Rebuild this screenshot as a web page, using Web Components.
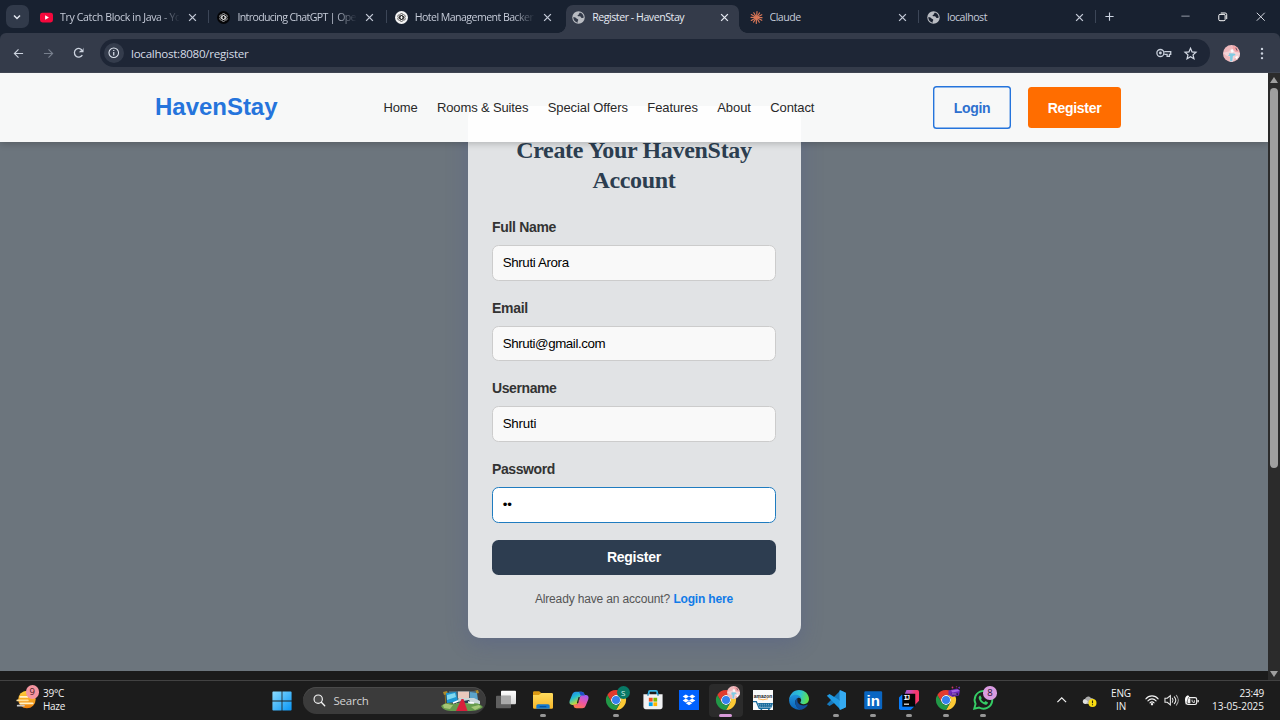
<!DOCTYPE html>
<html lang="en">
<head>
<meta charset="utf-8">
<title>Register - HavenStay</title>
<style>
html,body{margin:0;height:100%;overflow:hidden;background:#1c1c1c}
body{font-family:"Open Sans","Noto Sans",sans-serif}
</style>
</head>
<body>
<desktop-screen></desktop-screen>
<script>
const define=(name,html,setup)=>customElements.define(name,class extends HTMLElement{
  connectedCallback(){
    if(this.shadowRoot)return;
    const t=document.createElement('template');
    t.innerHTML=typeof html==='function'?html(this):html;
    this.attachShadow({mode:'open'}).append(t.content.cloneNode(true));
    if(setup)setup(this);
  }
});

/* Text run whose tracking is adjusted so that it spans the width in its "w" attribute. */
define('fit-text','<style>:host{display:inline-block;white-space:pre}span{display:inline-block}</style><span><slot></slot></span>',el=>{
  const s=el.shadowRoot.querySelector('span'),n=el.textContent.length,w=parseFloat(el.getAttribute('w'));
  if(w){const k=(w-s.getBoundingClientRect().width)/n;s.style.letterSpacing=k.toFixed(3)+'px';el.style.width=w+'px';}
});

const chrome='<circle cx="24" cy="24" r="12" fill="#fff"/><path fill="#e33b2e" d="M24 12h20.8A24 24 0 0 0 3.2 12l10.4 18A12 12 0 0 1 24 12z"/><path fill="#fcc934" d="M34.4 30 24 48A24 24 0 0 0 44.8 12H24a12 12 0 0 1 10.4 18z"/><path fill="#229847" d="M13.6 30 3.2 12A24 24 0 0 0 24 48l10.4-18a12 12 0 0 1-20.8 0z"/><circle cx="24" cy="24" r="9.6" fill="#3581ee"/>';
const knot=c=>`<g fill="none" stroke="${c}" stroke-width="1.35">`+[0,60,120,180,240,300].map(a=>`<path transform="rotate(${a} 12 12)" d="M8 14.300V6.500a4.100 4.100 0 0 1 7.300-2.300M8 9.700l4-2.300 5.500 3.200"/>`).join('')+'</g>';
const globe='<circle cx="12" cy="12" r="11.5" fill="#b9bcc2"/><path fill="VAR" d="M2.5 11c3 .2 4.500 1 5.500 2.500 1 1.600 3 1 3.500 2.600.4 1.500-1.200 2-1.200 3.800 0 .7.300 1.300.6 1.900A10 10 0 0 1 2.500 11zM14.500 2.700c-.4 1.500-2 1.800-2 3.300 0 1.400-2.300 1.100-2.300 2.500 0 1.600 2.400 1.300 4.300 1.400 2 .1 1.600 2.800 3.200 2.900 1.500.1 2.100-.9 3.900-.4A10 10 0 0 0 14.500 2.700z"/>';
const I={
 down:['0 0 24 24','<path d="M6 9l6 6 6-6" fill="none" stroke="#e3e8f0" stroke-width="3"/>'],
 youtube:['0 0 24 24','<rect y="3" width="24" height="18" rx="4.500" fill="#f5083c"/><path fill="#fff" d="M9.500 8v8l7-4z"/>'],
 gptDark:['0 0 24 24','<circle cx="12" cy="12" r="12" fill="#050507"/><g transform="translate(2.400 2.400) scale(.8)">'+knot('#dcdcdc')+'</g>'],
 gptLight:['0 0 24 24','<circle cx="12" cy="12" r="12" fill="#f4f4f4"/><g transform="translate(2.400 2.400) scale(.8)">'+knot('#202020')+'</g>'],
 globe:['0 0 24 24',globe.replace('VAR','#1a2130')],
 globeActive:['0 0 24 24',globe.replace('VAR','#343b4a')],
 claude:['0 0 24 24','<g stroke="#d97757" stroke-width="2.100" stroke-linecap="round">'+[5,34,62,92,118,150,182,213,240,272,300,331].map((a,i)=>`<path transform="rotate(${a} 12 12)" d="M12 12V${i%2?1.8:.9}"/>`).join('')+'</g>'],
 x:['0 0 24 24','<path d="M3 3l18 18M21 3L3 21" stroke="currentColor" stroke-width="3.500"/>'],
 xthin:['0 0 24 24','<path d="M2 2l20 20M22 2L2 22" stroke="#dfe3ea" stroke-width="2.400"/>'],
 plus:['0 0 24 24','<path d="M12 1v22M1 12h22" stroke="#cdd5e2" stroke-width="3"/>'],
 min:['0 0 24 24','<path d="M1 11h22" stroke="#aab0ba" stroke-width="2.300"/>'],
 restore:['0 0 24 24','<g fill="none" stroke="#fff" stroke-width="2.500"><rect x="2" y="6" width="16" height="16" rx="3"/><path d="M7 2.500h11a4 4 0 0 1 4 4V18"/></g>'],
 back:['0 0 24 24','<path d="M22 12H3M12 3l-9 9 9 9" fill="none" stroke="#ccd3df" stroke-width="2.500"/>'],
 forward:['0 0 24 24','<path d="M2 12h19M12 3l9 9-9 9" fill="none" stroke="#777f8d" stroke-width="2.500"/>'],
 reload:['0 0 24 24','<path d="M19.500 17A9 9 0 1 1 20 8" fill="none" stroke="#ccd3df" stroke-width="2.700"/><path d="M22 1v10H12l4-3.500 4-1z" fill="#ccd3df"/>'],
 info:['0 0 24 24','<circle cx="12" cy="12" r="10" fill="none" stroke="#dfe5ef" stroke-width="2.200"/><path d="M12 10.500v7M12 6v2.600" stroke="#dfe5ef" stroke-width="2.500"/>'],
 key:['0 0 30 18','<path d="M16 6.200h12.500v5.300H26V15.500h-4.500v-4H16" fill="none" stroke="#c8cfdb" stroke-width="2.500"/><circle cx="8.500" cy="9" r="6.800" fill="none" stroke="#c8cfdb" stroke-width="2.500"/><circle cx="8.500" cy="9" r="2.800" fill="#c8cfdb"/>'],
 star:['0 0 24 24','<path d="M12 2.500l2.900 6.600 7.200.7-5.400 4.800 1.600 7L12 17.900l-6.300 3.700 1.600-7L1.900 9.800l7.200-.7z" fill="none" stroke="#d4dae5" stroke-width="2.300"/>'],
 avatar:['0 0 24 24','<defs><clipPath id="c"><circle cx="12" cy="12" r="12"/></clipPath></defs><g clip-path="url(#c)"><rect width="24" height="24" fill="#efb9bd"/><path d="M0 11l8-2 4-4 5 5 7 1v7l-8 1-2 5H9l1-7-5-2z" fill="#f3d3d7"/><path d="M8 11.500l8 .5 2 2-4 1.500-1 7.500h-3v-7l-3-1 2-2z" fill="#7fcbe3"/><path d="M14 1l6 2 2 6-4 1-4-5z" fill="#f5a3a7"/><path d="M11 7l3-1 1 4-3 1zM17 17l4-2-1 6z" fill="#fff"/><path d="M18 4l2 4" stroke="#555261" stroke-width="1.300"/></g>'],
 dots:['0 0 6 24','<g fill="#ccd3df"><circle cx="3" cy="3.500" r="2.200"/><circle cx="3" cy="12" r="2.200"/><circle cx="3" cy="20.500" r="2.200"/></g>'],
 weather:['0 0 24 24','<defs><linearGradient id="g" x2="0" y2="1"><stop stop-color="#ffd13b"/><stop offset="1" stop-color="#ec7d0b"/></linearGradient></defs><circle cx="12.500" cy="12" r="10" fill="url(#g)"/><g stroke-linecap="round" stroke-width="2.100"><path stroke="#fff1c5" d="M5 9h8"/><path stroke="#ffe09a" d="M1.500 13h12"/><path stroke="#fff1c5" d="M5 16.500h14"/><path stroke="#c8c8c9" d="M2 19h7"/></g>'],
 windows:['0 0 24 24','<defs><linearGradient id="h" x2="1" y2="1"><stop stop-color="#8bdcff"/><stop offset="1" stop-color="#0795f5"/></linearGradient></defs><path fill="url(#h)" d="M1.500.5h10v11H.5v-10a1 1 0 0 1 1-1zM12.500.5h10a1 1 0 0 1 1 1v10h-11zM.5 12.500h11v11h-10a1 1 0 0 1-1-1zM12.500 12.500h11v10a1 1 0 0 1-1 1h-10z"/>'],
 search:['0 0 24 24','<circle cx="10" cy="10" r="8" fill="#4c4c4c" stroke="#f3f3f3" stroke-width="2.200"/><path d="M16 16l6.500 6.500" stroke="#f3f3f3" stroke-width="2.600" stroke-linecap="round"/>'],
 doodle:['0 0 42 21','<path d="M4 2l1 16M35 1l1 18" stroke="#8b7326" stroke-width="1"/><path d="M2 2l4-1 1 3-4 1zM33 1l4-1 1 3-4 1z" fill="#ad8b2a"/><rect x="8" y="1" width="27" height="11" fill="#4b6470"/><path d="M5 3l10-1 2 10-11 1z" fill="#1c98d4"/><path d="M6 5l8-2 1 4-9 3z" fill="#80d8ef"/><rect x="17" y="1.500" width="11" height="7" fill="#e9c9bd"/><path d="M29 2l7 1 1 7-8 1z" fill="#5ba4ca"/><path d="M18 8h15l6 3v3H15z" fill="#c8d6d8"/><path d="M16 12l12-2 2 3H15z" fill="#253e55"/><path d="M0 16c5-4 9-3 13-2l7-2 10 2c6-2 9 0 12 3-4 4-10 4-18 4H12C6 21 2 20 0 16z" fill="#669b4d"/><path d="M2 15c4-3 6 0 10 0l-3 4-6-1z" fill="#a4c777"/><path d="M30 17l8-2 2 2-6 3z" fill="#a4c777"/><path d="M20.500 9h2l4 12H15z" fill="#d91f3c"/><path d="M12 13l5-2M27 12l6 1" stroke="#fff" stroke-width="1.500"/>'],
 taskview:['0 0 24 24','<defs><linearGradient id="g" x2="0" y2="1"><stop stop-color="#fff"/><stop offset="1" stop-color="#d7d7d7"/></linearGradient></defs><rect x="6" y="1" width="18" height="16" rx="1" fill="url(#g)"/><rect y="7" width="18" height="15" rx="1" fill="#656565" opacity=".92"/><rect x="6" y="7" width="12" height="10" fill="#aaa"/>'],
 explorer:['0 0 24 24','<defs><linearGradient id="g" x2="0" y2="1"><stop stop-color="#ffdc5e"/><stop offset="1" stop-color="#f7b72a"/></linearGradient></defs><path d="M0 3q0-1.500 1.500-1.500h6L10 4v5H0z" fill="#dc9a13"/><path d="M0 6h7l3-2.500h12.500Q24 3.500 24 5v16q0 1.500-1.500 1.500h-21Q0 22.500 0 21z" fill="url(#g)"/><path d="M4 22.500V19q0-2 2-2h12q2 0 2 2v3.500z" fill="#1378cf"/><path d="M8 20h8" stroke="#064f92" stroke-width="1.400"/>'],
 copilot:['0 0 24 24','<defs><linearGradient id="a" x2=".6" y2="1"><stop stop-color="#2374ee"/><stop offset=".45" stop-color="#22bfd2"/><stop offset=".8" stop-color="#b8d741"/><stop offset="1" stop-color="#ffc42c"/></linearGradient><linearGradient id="b" x1=".7" x2=".2" y2="1"><stop stop-color="#a55cf0"/><stop offset=".5" stop-color="#ef56a2"/><stop offset="1" stop-color="#ff7b46"/></linearGradient></defs><path d="M8 2h7c2 0 3 1 3.500 3l.5 2h-3c-2 0-3 1-3.500 3L11 15c-.7 2-1.500 3-4 3H4c-3 0-4-2-3.200-5L4 5c.8-2 2-3 4-3z" fill="url(#a)"/><path d="M16 22H9c-2 0-3-1-3.500-3L5 17.500h3c2 0 3-1 3.500-3L13 9c.7-2 1.500-3 4-3h3c3 0 4 2 3.200 5L20 19c-.8 2-2 3-4 3z" fill="url(#b)"/><path d="M12 2h3c2 0 3 1 3.500 3l.5 1.500h-5z" fill="#1f50c9"/><path d="M11.500 8.500h1.300l-2 7-1.500.5z" fill="#1c1c1c"/>'],
 chrome:['0 0 48 48',chrome],
 store:['0 0 24 24','<path d="M7 6V2.500Q7 1 8.500 1h7Q17 1 17 2.500V6" fill="none" stroke="#35b4e4" stroke-width="2"/><path d="M.5 5h23v15.500q0 2.500-2.500 2.500H3Q.5 23 .5 20.500z" fill="#f1f2f3"/><path d="M7 9.300h4.600v4.600H7z" fill="#ef5022"/><path d="M12.500 9.300H17v4.600h-4.500z" fill="#7fb900"/><path d="M7 14.800h4.600v4.500H7z" fill="#00a3ee"/><path d="M12.500 14.800H17v4.500h-4.500z" fill="#ffb800"/><path d="M6 3.800V7M18 3.800V7" stroke="#1684ba" stroke-width="1.500"/>'],
 dropbox:['0 0 24 24','<rect width="24" height="24" fill="#0062ff"/><path fill="#fff" d="M8.200 5.500l-3.800 2.400 3.800 2.400L12 7.900zm7.600 0L12 7.900l3.800 2.400 3.800-2.400zM4.400 12.700l3.800 2.400 3.800-2.400-3.800-2.400zm11.400-2.400L12 12.700l3.800 2.400 3.800-2.400zM8.200 15.900l3.800 2.400 3.800-2.400-3.800-2.400z"/>'],
 amazon:['0 0 24 24','<rect width="24" height="24" fill="#fafafa"/><text x="12" y="9.500" text-anchor="middle" textLength="22" lengthAdjust="spacingAndGlyphs" font-family="Liberation Sans" font-weight="700" font-size="7.500" fill="#16181a">amazon</text><path d="M6 10.500q6 2.500 12 0" fill="none" stroke="#f79a26" stroke-width=".9"/><path d="M0 14h4l3.500 8H21" fill="none" stroke="#176a9c" stroke-width="1.500"/><path d="M6 15.500h18L22.500 21H8z" fill="#176a9c"/><path d="M8 17.200h15M8.500 19.300h14" stroke="#cfe2ee" stroke-width=".7" stroke-dasharray="1.200 1.300"/><circle cx="10" cy="23" r="1.100" fill="#176a9c"/><circle cx="19" cy="23" r="1.100" fill="#176a9c"/>'],
 edge:['0 0 24 24','<defs><linearGradient id="a" x2="1" y2=".2"><stop stop-color="#279ee4"/><stop offset=".6" stop-color="#2ec5cf"/><stop offset="1" stop-color="#5ce052"/></linearGradient><linearGradient id="b" x2="0" y2="1"><stop stop-color="#2094dc"/><stop offset="1" stop-color="#0b61b8"/></linearGradient></defs><path d="M.2 11.300C.8 5 5.700 0 12 0c7.500 0 12 5.500 12 10.800 0 3.700-2.800 6.200-6.200 6.200-3 0-4.200-1-4.200-1.900 0-.7 1-1.100 1-3 0-2.700-2.500-5.100-6-5.100-4 0-7 2-8.400 4.300z" fill="url(#a)"/><path d="M.1 12.500C.2 8 4.500 5.800 8.500 5.800c3 0 5.500 2 6 5-1-1.300-2.500-1.800-3.800-1.300-2.200.7-3.200 3-3.200 5 0 4.400 3.300 8 7.200 9A12 12 0 0 1 .1 12.500z" fill="url(#b)"/><path d="M10 10c-1.800 1-2.500 3-2.500 5 0 4.400 3.500 8 7.500 8.600 3.200-.8 5.600-2.700 7.300-5.400.4-.7-.2-1-.8-.7C16.500 20 10 17.800 10 12.300z" fill="#124f9b"/>'],
 vscode:['0 0 24 24','<path d="M17.500.3 23 3v4.500L4.200 19.300 1 17z" fill="#1679bd"/><path d="M17.500 23.700 23 21v-4.500L4.200 4.700 1 7z" fill="#209be4"/><path d="M17 .4 24 3.200v17.600l-7 2.800c-.4.100-.8-.1-.8-.6V1c0-.5.400-.7.8-.6z" fill="#35aaf1"/>'],
 linkedin:['0 0 24 24','<rect x="1.500" y="1.500" width="21.500" height="21.500" rx="1.500" fill="#0a66c2"/><text x="12.200" y="18.700" text-anchor="middle" font-family="Liberation Sans" font-weight="700" font-size="18" fill="#fff">in</text>'],
 intellij:['0 0 24 24','<defs><linearGradient id="a" y1=".3" x2="1" y2=".4"><stop stop-color="#7d5fe8"/><stop offset=".45" stop-color="#d04bb0"/><stop offset=".8" stop-color="#f7386c"/></linearGradient></defs><path d="M9 0h13q2 0 2 2v11l-7 7-13-9z" fill="url(#a)"/><path d="M0 9l4-4 16 13-6 6H2q-2 0-2-2z" fill="#087cfa"/><rect x="4" y="4.500" width="15.500" height="15.500" fill="#050505"/><text x="5.500" y="12.500" font-family="Liberation Mono" font-weight="700" font-size="8.500" textLength="8" fill="#fff">IJ</text><path d="M6 17h6" stroke="#fff" stroke-width="1.400"/>'],
 whatsapp:['0 0 24 24','<path d="M1.500 22.500l1.600-5.900A10.600 10.600 0 1 1 7.300 21z" fill="none" stroke="#35cd65" stroke-width="2.300"/><path d="M8.800 6.700c-.9-.1-2.100 1.300-2 2.700.3 3.900 4.500 7.600 8 8.300 1.700.1 3.300-1.300 3.200-2.800l-3-1.700-1.500 1.500c-1.700-.8-3-2-3.800-3.700L10.500 9.500z" fill="#35cd65"/>'],
 up:['0 0 24 24','<path d="M1 18L12 7l11 11" fill="none" stroke="#f2f2f2" stroke-width="3"/>'],
 onedrive:['0 0 30 26','<path d="M3 18c-3-3-1-8 3-8C8 4 15 3 18 8c4 0 6 2 7 5v7H7z" fill="#aaa"/><path d="M3 12c4-2 7 0 9 4l-5 4c-6-1-6-5-4-8z" fill="#dfdfdf"/><circle cx="21" cy="18" r="8" fill="#f8dc12"/><path d="M21 13v5.500M21 20.500v2" stroke="#2b2b11" stroke-width="2.200"/>'],
 wifi:['0 0 24 20','<g fill="none" stroke="#f3f3f3" stroke-width="1.900" stroke-linecap="round"><path d="M1.500 8C7 1.300 17 1.300 22.500 8M5 11.500c4-4.500 10-4.500 14 0M8.500 14.800c2-2.200 5-2.200 7 0"/></g><circle cx="12" cy="17.300" r="2" fill="#f3f3f3"/>'],
 sound:['0 0 26 22','<g fill="none" stroke="#e9e9e9" stroke-width="1.900" stroke-linecap="round"><path d="M1.500 7.500h4L11 3v16l-5.500-4.500h-4z"/><path d="M14.500 7.500c1.500 2 1.500 5 0 7M18 5c3 3.500 3 8.500 0 12"/><path d="M21.500 2.500c4.500 5 4.500 12 0 17" stroke="#a8a8a8"/></g>'],
 battery:['0 0 26 22','<rect x="4" y="6" width="18" height="12" rx="3" fill="none" stroke="#f0f0f0" stroke-width="2"/><path d="M24.500 10v4" stroke="#f0f0f0" stroke-width="2.400"/><path d="M6 8h5v8H6z" fill="#f0f0f0"/><path d="M2 12c-1-5 1-9 5-10 4 3 4 8-1 11L3 18z" fill="#fff"/><path d="M8 5q-2 5-3 10" stroke="#1c1c1c" stroke-width="1" fill="none"/><path d="M14 9.500v2.500q0 2.500 4 2.500v-4" fill="none" stroke="#f0f0f0" stroke-width="1.500"/>'],
 gamer:['0 0 28 26','<path d="M3 9l17-4 6 4-2 10-13 3-8-4z" fill="#6a28b8"/><path d="M8 9l14-2 3 3-14 3z" fill="#a862e6"/><path d="M9 15l12-1 1 4-11 1z" fill="#251047"/><path d="M10 16h9" stroke="#cf87ff" stroke-width="2"/><circle cx="11" cy="3" r="1.800" fill="#d03868"/><circle cx="19" cy="1.500" r="1.500" fill="#8c2451"/><path d="M22 3l4-2-1 5z" fill="#7b3bd0"/>']
};
define('app-icon',el=>{
  const [vb,body]=I[el.getAttribute('name')],s=el.getAttribute('size')||14,h=el.getAttribute('h')||s;
  return `<style>:host{display:block;flex:none;width:${s}px;height:${h}px}svg{display:block;overflow:visible}</style><svg width="${s}" height="${h}" viewBox="${vb}">${body}</svg>`;
});

define('browser-tab',el=>`<style>
:host{display:block;position:relative;flex:none;width:177.4px;height:33px;box-sizing:border-box;color:#c5cbd8}
.tab{box-sizing:border-box;height:28px;margin:5px 3px 0 2px;padding:0 5px 4px 6px;display:flex;align-items:center}
:host([active]) .tab{background:#343b4a;border-radius:7px 7px 0 0;color:#e6eaf2;box-shadow:0 4px #343b4a}
.foot{display:none}
:host([active]) .foot{display:block;position:absolute;bottom:0;width:8px;height:8px}
.l{left:-6px;background:radial-gradient(circle at 0 0,transparent 7.500px,#343b4a 8px)}
.r{right:-5px;background:radial-gradient(circle at 100% 0,transparent 7.500px,#343b4a 8px)}
.t{margin-left:7px;width:119px;height:20px;overflow:hidden;font-size:10.600px;line-height:20px;white-space:nowrap;flex:none}
:host([fade]) .t{-webkit-mask:linear-gradient(90deg,#000 82%,transparent 101%)}
.c{margin-left:9px}
.sep{position:absolute;right:0;top:10px;width:1px;height:13px;background:#3c4657}
:host([nosep]) .sep{display:none}
</style><div class="tab"><app-icon name="${el.getAttribute('icon')}" size="13"></app-icon><div class="t"><slot></slot></div><app-icon class="c" name="x" size="9"></app-icon></div><i class="foot l"></i><i class="foot r"></i><i class="sep"></i>`);

define('tab-strip',`<style>
:host{display:flex;height:33px;background:#182130;align-items:stretch}
.menu{width:23px;height:23px;margin:5px 0 0 5.500px;border-radius:7px;background:#313a4a;display:flex;align-items:center;justify-content:center;flex:none}
.tabs{display:flex;margin-left:3.500px}
.plus{margin:12px 0 0 9px}
.win{display:flex;margin:11.500px 14.500px 0 auto;gap:28.500px;align-items:flex-start}
</style><div class="menu"><app-icon name="down" size="12"></app-icon></div>
<div class="tabs">
<browser-tab icon="youtube" fade><fit-text w="121">Try Catch Block in Java - Yo</fit-text></browser-tab>
<browser-tab icon="gptDark" fade><fit-text w="118.500">Introducing ChatGPT | Ope</fit-text></browser-tab>
<browser-tab icon="gptLight" fade nosep><fit-text w="118.500">Hotel Management Backer</fit-text></browser-tab>
<browser-tab icon="globeActive" active nosep><fit-text w="92">Register - HavenStay</fit-text></browser-tab>
<browser-tab icon="claude"><fit-text w="31">Claude</fit-text></browser-tab>
<browser-tab icon="globe"><fit-text w="40">localhost</fit-text></browser-tab>
</div><app-icon class="plus" name="plus" size="9"></app-icon>
<div class="win"><app-icon name="min" size="9"></app-icon><app-icon name="restore" size="9.500"></app-icon><app-icon name="xthin" size="9.500"></app-icon></div>`);

define('tool-bar',`<style>
:host{display:block;height:40px;background:#182130}
.bar{height:40px;box-sizing:border-box;background:#343b4a;border-radius:6px 6px 0 0;display:flex;align-items:center;padding:0 16px 0 13px;box-shadow:inset 0 -1px #3f4552}
.nav{display:flex;gap:19px;align-items:center;width:87px}
.omni{flex:1;height:28px;border-radius:14px;background:#1e2636;display:flex;align-items:center;padding:0 13.500px 0 4px;box-sizing:border-box}
.chip{width:20px;height:20px;border-radius:50%;background:#343c4c;display:flex;align-items:center;justify-content:center}
fit-text{margin-left:7px;font-size:11.600px;color:#d5dbe6}
.right{margin-left:auto;display:flex;gap:12.500px;align-items:center}
.av{margin:0 20px 0 13px}
</style><div class="bar"><div class="nav"><app-icon name="back" size="11"></app-icon><app-icon name="forward" size="11"></app-icon><app-icon name="reload" size="11.500"></app-icon></div>
<div class="omni"><div class="chip"><app-icon name="info" size="11.500"></app-icon></div><fit-text w="117.500">localhost:8080/register</fit-text><div class="right"><app-icon name="key" size="15.500" h="10"></app-icon><app-icon name="star" size="13"></app-icon></div></div>
<app-icon class="av" name="avatar" size="17"></app-icon><app-icon name="dots" size="4" h="13"></app-icon></div>`);

define('site-header',`<style>
:host{display:flex;position:absolute;inset:0 0 auto 0;height:69px;box-sizing:border-box;align-items:center;padding:0 0 0 155px;background:rgba(255,255,255,.95);box-shadow:0 1.500px 7px rgba(0,0,0,.22);font-family:"Liberation Sans",Arial,sans-serif}
.logo{font-size:24px;font-weight:700;color:#2574dc;margin-bottom:1px}
nav{display:flex;gap:19.500px;margin:0 0 1px 106px;font-size:13px;color:#292929}
.acts{display:flex;align-items:center;gap:16.500px;margin-left:118.500px;font-weight:700;font-size:14px}
.b{box-sizing:border-box;border-radius:3.500px;display:flex;align-items:center;justify-content:center}
.login{width:78.500px;height:43.500px;box-shadow:inset 0 0 0 1.400px #2574dc;color:#2e70cf}
.reg{width:93.500px;height:41px;background:#ff6d00;color:#fff}
</style><fit-text class="logo" w="122.500">HavenStay</fit-text>
<nav><fit-text w="34">Home</fit-text><fit-text w="91.300">Rooms &amp; Suites</fit-text><fit-text w="80">Special Offers</fit-text><fit-text w="50.500">Features</fit-text><fit-text w="33.500">About</fit-text><fit-text w="44">Contact</fit-text></nav>
<div class="acts"><div class="b login"><fit-text w="36.500">Login</fit-text></div><div class="b reg"><fit-text w="53.500">Register</fit-text></div></div>`);

define('form-field',el=>`<style>
:host{display:block;height:80.700px}
.l{display:block;height:15px;line-height:15px;font-weight:700;font-size:14px;color:#333}
.i{margin-top:10px;height:35.500px;box-sizing:border-box;border:1px solid #ccc;border-radius:6.500px;background:#f9f9f9;display:flex;align-items:center;padding:0 0 1px 9.700px;font-size:13.330px;color:#000}
:host([focus]) .i{background:#fff;border-color:#1f7cc0}
</style><fit-text class="l" w="${el.getAttribute('lw')}">${el.getAttribute('label')}</fit-text><div class="i"><slot></slot></div>`);

define('register-card',`<style>
:host{display:block;width:333.500px;height:531.500px;box-sizing:border-box;margin:33px 0 0 467.500px;padding:29px 25.200px 0 24.500px;border-radius:13px;background:rgba(255,255,255,.8);box-shadow:0 5px 21px rgba(65,80,150,.29);font-family:"Liberation Sans",Arial,sans-serif;color:#555}
h2{margin:0 0 25.100px;height:60px;font:700 24px/30px "Liberation Serif","Times New Roman",serif;color:#2c3e50;text-align:center}
h2 fit-text{display:block;margin:0 auto}
form-field:last-of-type{height:77.500px}
.btn{height:35.500px;box-sizing:border-box;padding-bottom:1px;border-radius:6.500px;background:#2d3d50;color:#fff;font-weight:700;font-size:14px;display:flex;align-items:center;justify-content:center}
.alt{margin-top:17px;display:flex;justify-content:center;gap:3.500px;font-size:12px;line-height:15px}
.alt b{color:#117be8}
</style><h2><fit-text w="235.500">Create Your HavenStay</fit-text><fit-text w="83">Account</fit-text></h2>
<form-field label="Full Name" lw="64"><fit-text w="66">Shruti Arora</fit-text></form-field>
<form-field label="Email" lw="36"><fit-text w="102.500">Shruti@gmail.com</fit-text></form-field>
<form-field label="Username" lw="64.500"><fit-text w="33.500">Shruti</fit-text></form-field>
<form-field label="Password" lw="63" focus><fit-text w="9">••</fit-text></form-field>
<div class="btn"><fit-text w="54">Register</fit-text></div>
<div class="alt"><fit-text w="135">Already have an account?</fit-text><b><fit-text w="59.500">Login here</fit-text></b></div>`);

define('scroll-bar',`<style>
:host{display:flex;flex-direction:column;align-items:center;width:12.500px;height:607px;background:#2b2b2b;flex:none}
.u,.d{width:0;height:0;border:4.500px solid transparent}
.u{border-bottom:6px solid #9f9f9f;border-top:0;margin-top:4px}
.d{border-top:6px solid #9f9f9f;border-bottom:0;margin:auto 0 3px}
.th{width:7.500px;height:380px;border-radius:4px;background:#9f9f9f;margin-top:5px}
</style><i class="u"></i><i class="th"></i><i class="d"></i>`);

define('web-page',`<style>
:host{display:flex;height:607px;background:#1b1b1b}
.v{position:relative;width:1267.500px;height:598px;background:#6c757d;overflow:hidden;display:flow-root}
</style><div class="v"><register-card></register-card><site-header></site-header></div><scroll-bar></scroll-bar>`);

define('task-app',el=>`<style>
:host{display:block;position:relative;width:36.670px;height:39px;flex:none}
.cell{width:34px;height:33.500px;margin:2.500px auto 0;border-radius:4px;display:flex;align-items:center;justify-content:center}
:host([active]) .cell{background:#2b2b2b}
.run{position:absolute;top:33px;left:15.300px;width:6px;height:2.500px;border-radius:2px;background:#969696}
:host([active]) .run{width:13px;left:11.800px;background:#d79ad8}
:host([idle]) .run{display:none}
.badge{position:absolute;left:19px;top:5px;width:13px;height:13px;display:grid;place-items:center;border-radius:50%}
</style><div class="cell"><app-icon name="${el.getAttribute('icon')}" size="20"></app-icon></div><i class="run"></i><span class="badge"><slot></slot></span>`);

define('task-bar',`<style>
:host{display:flex;position:relative;height:40px;box-sizing:border-box;border-top:1px solid #424242;background:#1c1c1c;color:#f2f2f2;font-size:10px}
.wx{display:flex;padding-left:16px;width:255px;box-sizing:border-box;flex:none}
.wi{position:relative;width:27px;padding-top:8px}
.wb{position:absolute;left:9.500px;top:4px;width:13.500px;height:13.500px;border-radius:50%;background:#f495a0;color:#4a1b22;font-size:9.500px;line-height:13.500px;text-align:center}
.two{display:flex;flex-direction:column;padding-top:5.500px;line-height:13.500px}
.start{width:48px;padding:9.500px 0 0 16.500px;box-sizing:border-box;flex:none}
.search{width:183px;height:26.500px;margin-top:6px;border-radius:14px;background:#3b3b3b;box-shadow:inset 0 1px #4a4a4a;display:flex;align-items:center;padding-left:10px;box-sizing:border-box;font-size:11.500px;flex:none;color:#d2d2d2}
.search fit-text{margin-left:8px}.search .d{margin-left:72px}
.apps{display:flex;margin-left:1.700px}
.s{width:13px;height:13px;border-radius:50%;background:#087966;color:#d8f2ed;font-size:8px;line-height:13px;text-align:center}
.n{width:13.500px;height:13.500px;border-radius:50%;background:#d99be0;color:#25142a;font-size:9.500px;line-height:13px;text-align:center}
.tray{margin-left:auto;display:flex;padding-right:16px}
.mid{height:38px;display:flex;align-items:center}
.c{align-items:center}.e{align-items:flex-end}
</style>
<div class="wx"><div class="wi"><app-icon name="weather" size="21"></app-icon><span class="wb">9</span></div><div class="two"><fit-text w="21">39°C</fit-text><fit-text w="22">Haze</fit-text></div></div>
<div class="start"><app-icon name="windows" size="20"></app-icon></div>
<div class="search"><app-icon name="search" size="12.500"></app-icon><fit-text w="35">Search</fit-text><app-icon class="d" name="doodle" size="42" h="21"></app-icon></div>
<div class="apps"><task-app icon="taskview" idle></task-app><task-app icon="explorer"></task-app><task-app icon="copilot" idle></task-app><task-app icon="chrome"><div class="s">S</div></task-app><task-app icon="store" idle></task-app><task-app icon="dropbox" idle></task-app><task-app icon="chrome" active><app-icon name="avatar" size="13"></app-icon></task-app><task-app icon="amazon" idle></task-app><task-app icon="edge" idle></task-app><task-app icon="vscode"></task-app><task-app icon="linkedin"></task-app><task-app icon="intellij"></task-app><task-app icon="chrome"><app-icon name="gamer" size="14" h="13"></app-icon></task-app><task-app icon="whatsapp"><div class="n">8</div></task-app></div>
<div class="tray"><div class="mid"><app-icon name="up" size="9.500"></app-icon><app-icon name="onedrive" size="15" h="13" style="margin-left:15px"></app-icon></div>
<div class="two c" style="width:20px;margin-left:14.500px"><fit-text w="20">ENG</fit-text><fit-text w="10">IN</fit-text></div>
<div class="mid" style="margin-left:14px;gap:5px"><app-icon name="wifi" size="14" h="12"></app-icon><app-icon name="sound" size="15" h="12.500"></app-icon><app-icon name="battery" size="15" h="13"></app-icon></div>
<div class="two e" style="margin-left:13px"><fit-text w="24.500">23:49</fit-text><fit-text w="52">13-05-2025</fit-text></div></div>`);

define('desktop-screen',`<style>:host{display:block;width:1280px;height:720px;overflow:hidden}</style><tab-strip></tab-strip><tool-bar></tool-bar><web-page></web-page><task-bar></task-bar>`);
</script>
</body>
</html>
